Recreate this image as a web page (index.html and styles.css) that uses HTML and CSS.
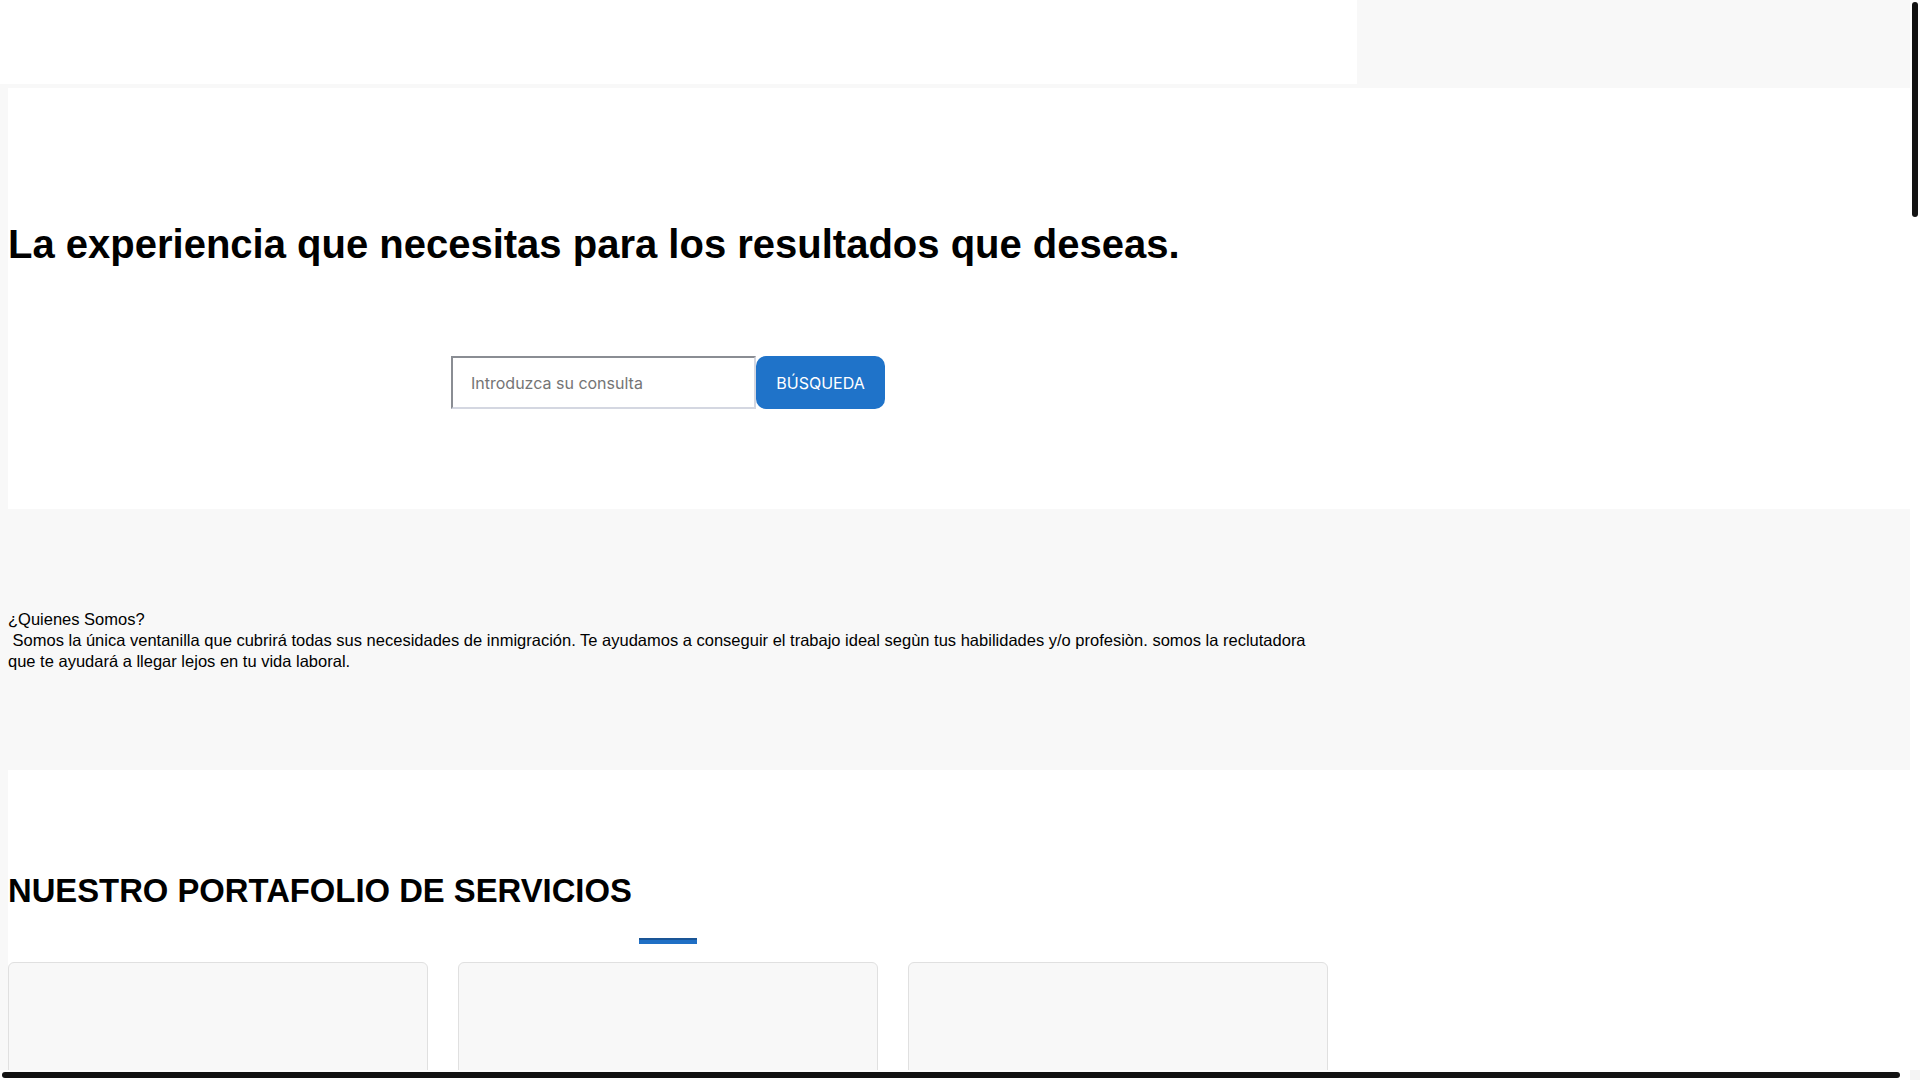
FILE: index.html
```html
<!DOCTYPE html>
<html lang="es">
<head>
<meta charset="utf-8">
<title>Inicio</title>
<link rel="stylesheet" href="styles.css">
</head>
<body>
<header class="site-header">
  <div class="header-main"></div>
  <div class="header-side"></div>
</header>
<main class="page">
  <section class="hero">
    <div class="container">
      <h1 class="hero-title">La experiencia que necesitas para los resultados que deseas.</h1>
      <form class="search-form" action="#" onsubmit="return false;">
        <input class="search-input" type="text" placeholder="Introduzca su consulta">
        <button class="search-button" type="submit">BÚSQUEDA</button>
      </form>
    </div>
  </section>
  <section class="about">
    <div class="container">
      <p class="about-text">¿Quienes Somos?<br>&nbsp;Somos la única ventanilla que cubrirá todas sus necesidades de inmigración. Te ayudamos a conseguir el trabajo ideal segùn tus habilidades y/o profesiòn. somos la reclutadora que te ayudará a llegar lejos en tu vida laboral.</p>
    </div>
  </section>
  <section class="services">
    <div class="container">
      <h2 class="services-title">NUESTRO PORTAFOLIO DE SERVICIOS</h2>
      <div class="divider"></div>
      <div class="cards">
        <div class="card"></div>
        <div class="card"></div>
        <div class="card"></div>
      </div>
    </div>
  </section>
</main>
<div class="scrollbar scrollbar-v"><div class="thumb thumb-v"></div></div>
<div class="scrollbar scrollbar-h"><div class="thumb thumb-h"></div></div>
<div class="scroll-corner"></div>
</body>
</html>
```
FILE: styles.css
```css
html, body {
  margin: 0;
  padding: 0;
}
html {
  overflow-x: hidden;
}
body {
  background: #f8f8f8;
  font-family: "Liberation Sans", Arial, sans-serif;
  color: #000;
}
.site-header {
  display: flex;
  height: 84px;
  width: 1910px;
}
.header-main {
  width: 1357px;
  background: #fff;
}
.header-side {
  flex: 1;
}
.page {
  padding: 4px 0 0 8px;
  width: 1902px;
}
.hero {
  background: #fff;
  padding: 100px 0 100px;
}
.container {
  width: 1320px;
}
.hero-title {
  font-size: 40px;
  font-weight: bold;
  margin: 34px 0 89px;
  line-height: normal;
}
.search-form {
  display: flex;
  justify-content: center;
  margin: 0;
}
.search-input {
  box-sizing: border-box;
  width: 305px;
  height: 53px;
  border-style: solid;
  border-width: 2px;
  border-color: #8a8d93 #d4d7e1 #d4d7e1 #8a8d93;
  padding: 0 18px;
  font-family: Inter, "Noto Sans", sans-serif;
  font-size: 16px;
  color: #333;
  background: #fff;
  margin: 0;
  outline: none;
}
.search-input::placeholder {
  color: #757575;
}
.search-button {
  box-sizing: border-box;
  width: 129px;
  height: 53px;
  border: none;
  border-radius: 10px;
  background: #1f73c9;
  color: #fff;
  font-family: Inter, "Noto Sans", sans-serif;
  font-size: 16px;
  padding: 0 20px;
  margin: 0;
  cursor: pointer;
}
.about {
  background: #f8f8f8;
  padding: 100px 0 99px;
}
.about-text {
  margin: 0;
  max-width: 1305px;
  font-size: 16.5px;
  line-height: 20.8px;
}
.services {
  background: #fff;
  padding: 102px 0 0;
  min-height: 4560px;
  box-sizing: border-box;
}
.services-title {
  font-size: 32.8px;
  font-weight: bold;
  margin: 0;
  line-height: normal;
}
.divider {
  width: 58px;
  height: 6px;
  margin: 28px auto 0;
  background: #1f6fc5;
  border-top: 2px solid #1a5596;
  box-sizing: border-box;
}
.cards {
  display: grid;
  grid-template-columns: repeat(3, 1fr);
  gap: 30px;
  margin-top: 18px;
}
.card {
  height: 420px;
  background: #f8f8f8;
  border: 1px solid #e0e0e0;
  border-radius: 6px;
}
.scrollbar {
  position: fixed;
  background: #fff;
  z-index: 10;
}
.scrollbar-v {
  top: 0;
  right: 0;
  width: 10px;
  height: 1070px;
}
.scrollbar-h {
  left: 0;
  bottom: 0;
  width: 1910px;
  height: 10px;
}
.thumb {
  position: absolute;
  background: #131313;
  border-radius: 3px;
}
.thumb-v {
  left: 2px;
  top: 2px;
  width: 6px;
  height: 215px;
}
.thumb-h {
  left: 2px;
  top: 2px;
  width: 1898px;
  height: 6px;
}
.scroll-corner {
  position: fixed;
  right: 0;
  bottom: 0;
  width: 10px;
  height: 10px;
  background: #f4f4f4;
  z-index: 10;
}
```
